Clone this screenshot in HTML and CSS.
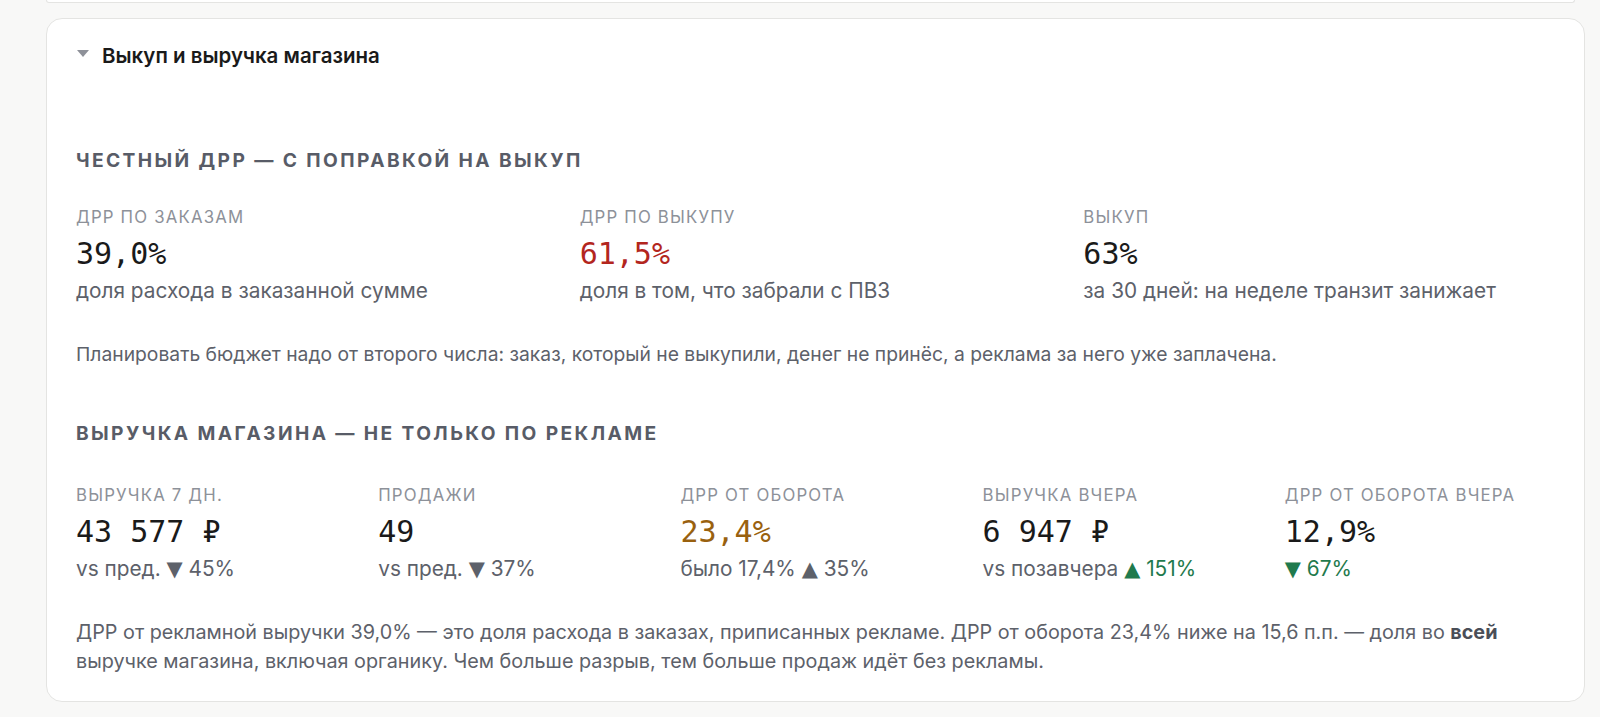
FILE: index.html
```html
<!DOCTYPE html>
<html lang="ru">
<head>
<meta charset="utf-8">
<title>Выкуп и выручка магазина</title>
<link rel="stylesheet" href="styles.css">
</head>
<body>
<div class="page">
  <div class="prev-card"></div>
  <section class="card">
    <div class="summary">
      <svg class="caret" width="12" height="8" viewBox="0 0 12 8"><path d="M0 0 H12 L6 7 Z" fill="#8e9199"/></svg>
      <span class="summary-title">Выкуп и выручка магазина</span>
    </div>

    <h2 class="heading first">Честный ДРР — с поправкой на выкуп</h2>
    <div class="grid grid-3">
      <div class="metric">
        <div class="label">ДРР по заказам</div>
        <div class="value">39,0%</div>
        <div class="sub">доля расхода в заказанной сумме</div>
      </div>
      <div class="metric">
        <div class="label">ДРР по выкупу</div>
        <div class="value red">61,5%</div>
        <div class="sub">доля в том, что забрали с ПВЗ</div>
      </div>
      <div class="metric">
        <div class="label">Выкуп</div>
        <div class="value">63%</div>
        <div class="sub">за 30 дней: на неделе транзит занижает</div>
      </div>
    </div>
    <p class="note">Планировать бюджет надо от второго числа: заказ, который не выкупили, денег не принёс, а реклама за него уже заплачена.</p>

    <h2 class="heading second">Выручка магазина — не только по рекламе</h2>
    <div class="grid grid-5">
      <div class="metric">
        <div class="label">Выручка 7 дн.</div>
        <div class="value">43 577 ₽</div>
        <div class="sub">vs пред. <span class="tri">▼</span> 45%</div>
      </div>
      <div class="metric">
        <div class="label">Продажи</div>
        <div class="value">49</div>
        <div class="sub">vs пред. <span class="tri">▼</span> 37%</div>
      </div>
      <div class="metric">
        <div class="label">ДРР от оборота</div>
        <div class="value amber">23,4%</div>
        <div class="sub">было 17,4% <span class="tri">▲</span> 35%</div>
      </div>
      <div class="metric">
        <div class="label">Выручка вчера</div>
        <div class="value">6 947 ₽</div>
        <div class="sub">vs позавчера <span class="good"><span class="tri">▲</span> 151%</span></div>
      </div>
      <div class="metric">
        <div class="label">ДРР от оборота вчера</div>
        <div class="value">12,9%</div>
        <div class="sub"><span class="good"><span class="tri">▼</span> 67%</span></div>
      </div>
    </div>
    <p class="footer-note">ДРР от рекламной выручки 39,0% — это доля расхода в заказах, приписанных рекламе. ДРР от оборота 23,4% ниже на 15,6 п.п. — доля во <b>всей</b> выручке магазина, включая органику. Чем больше разрыв, тем больше продаж идёт без рекламы.</p>
  </section>
</div>
</body>
</html>
```
FILE: styles.css
```css
html, body {
  margin: 0;
  padding: 0;
  background: #f8f8f7;
  font-family: Inter, "Noto Sans", "DejaVu Sans", sans-serif;
  color: #1c1c1e;
}

.page {
  padding: 0 15px 0 46px;
}

.prev-card {
  height: 2px;
  margin-right: 10px;
  background: #ffffff;
  border: 1px solid #e4e4e2;
  border-top: none;
  border-radius: 0 0 14px 14px;
}

.card {
  margin-top: 15px;
  background: #ffffff;
  border: 1px solid #e4e4e2;
  border-radius: 16px;
  padding: 0 29px 25px 29px;
}

.summary {
  display: flex;
  align-items: center;
  gap: 13px;
  padding-top: 25px;
  height: 24px;
}

.caret {
  margin-left: 1px;
  margin-top: -4px;
}

.summary-title {
  font-size: 20.5px;
  font-weight: 600;
  line-height: 24px;
  color: #1a1a1a;
}

.heading {
  margin: 0;
  font-size: 19.2px;
  font-weight: 700;
  line-height: 20px;
  letter-spacing: 0.125em;
  text-transform: uppercase;
  color: #585c67;
}

.heading.first {
  margin-top: 82px;
}

.heading.second {
  margin-top: 57px;
}

.grid {
  display: grid;
  margin-top: 38px;
  column-gap: 32px;
}

.grid-3 {
  grid-template-columns: repeat(3, minmax(0, 1fr));
}

.grid-5 {
  grid-template-columns: repeat(5, minmax(0, 1fr));
  margin-top: 43px;
}

.label {
  font-size: 16.8px;
  line-height: 18px;
  letter-spacing: 0.07em;
  text-transform: uppercase;
  color: #8d9199;
}

.value {
  margin-top: 10px;
  font-family: "DejaVu Sans Mono", "Liberation Mono", monospace;
  font-size: 30px;
  line-height: 36px;
  color: #1a1a1a;
}

.value.red {
  color: #b3261e;
}

.value.amber {
  color: #99610f;
}

.sub {
  margin-top: 7px;
  font-size: 20.8px;
  line-height: 24px;
  color: #5d616a;
  white-space: nowrap;
}

.tri {
  font-family: "DejaVu Sans", sans-serif;
  font-size: 21px;
  line-height: 20px;
}

.good {
  color: #1f7a4d;
}

.note {
  margin: 39px 0 0;
  font-size: 19.3px;
  line-height: 24px;
  color: #5d616a;
}

.footer-note {
  margin: 37px 0 0;
  font-size: 19.8px;
  line-height: 29px;
  color: #5d616a;
}

.footer-note b {
  font-weight: 700;
  color: #4a4e57;
}
```
